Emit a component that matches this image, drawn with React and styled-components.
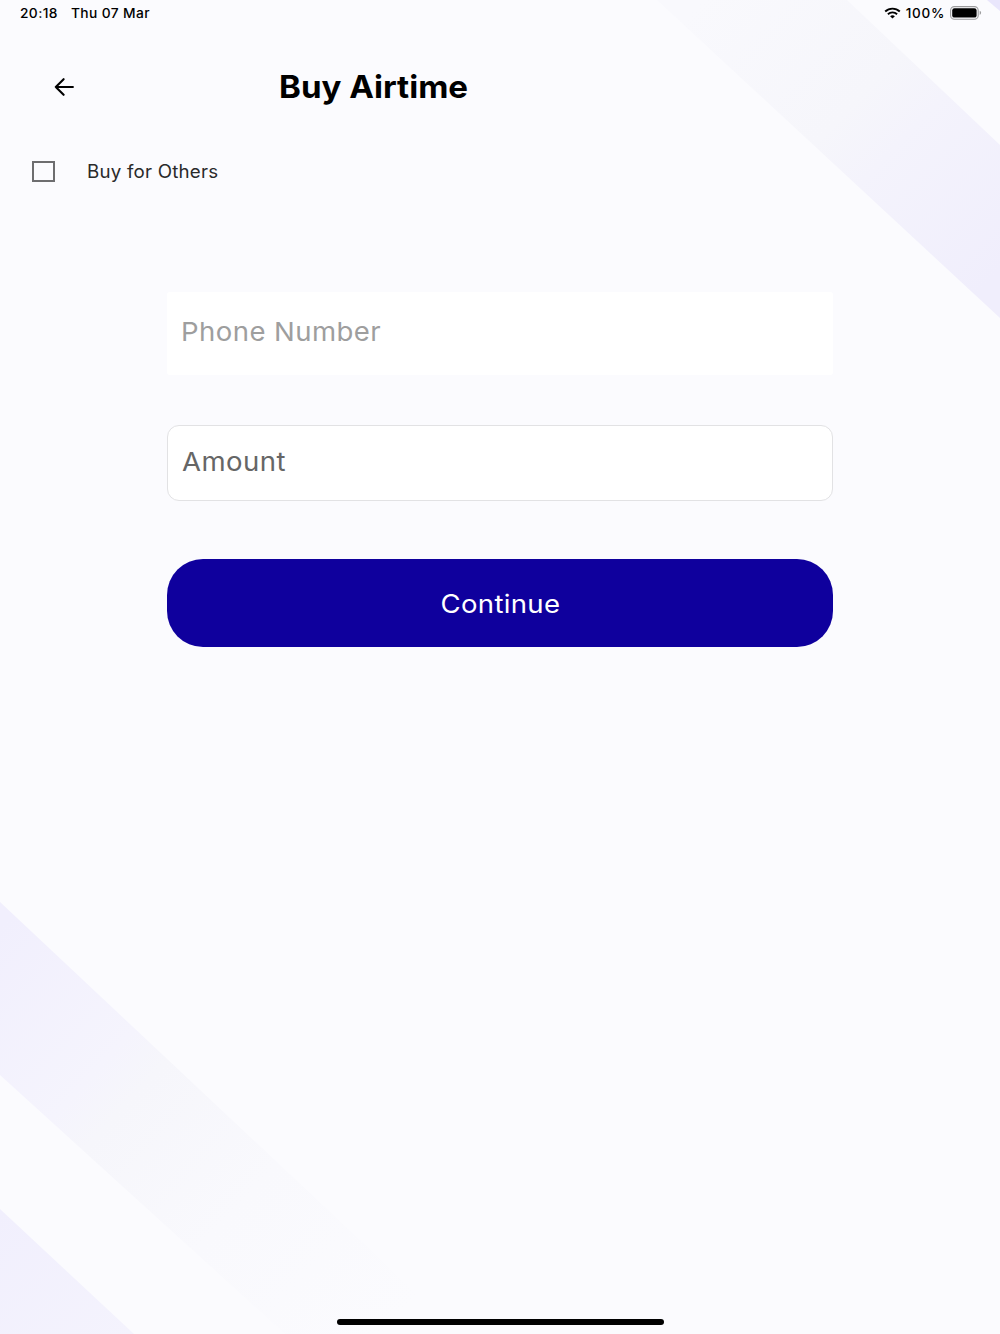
import React, { useState } from "react";
import styled, { createGlobalStyle } from "styled-components";

const BuyAirtime = () => {
  const [others, setOthers] = useState(false);

  return (
    <Screen>
      <GlobalStyle />
      <Stripes />
      <StatusBar>
        <StatusGroup $gap="15px">
          <StatusText>20:18</StatusText>
          <StatusText>Thu 07 Mar</StatusText>
        </StatusGroup>
        <StatusGroup $gap="5px">
          <WifiIcon />
          <Percent>100%</Percent>
          <BatteryIcon />
        </StatusGroup>
      </StatusBar>
      <Header>
        <BackButton aria-label="Back">
          <BackIcon />
        </BackButton>
        <Title>Buy Airtime</Title>
      </Header>
      <CheckRow onClick={() => setOthers(!others)}>
        <CheckBox $checked={others} />
        <CheckLabel>Buy for Others</CheckLabel>
      </CheckRow>
      <Form>
        <PhoneField>
          <Placeholder $color="#9e9e9e">Phone Number</Placeholder>
        </PhoneField>
        <AmountField>
          <Placeholder $color="#666666">Amount</Placeholder>
        </AmountField>
        <ContinueButton type="button">
          <ButtonText>Continue</ButtonText>
        </ContinueButton>
      </Form>
      <HomeIndicator />
    </Screen>
  );
};

export default BuyAirtime;

const Stripes = () => (
  <Backdrop viewBox="0 0 1000 1334">
    <defs>
      <linearGradient
        id="topStripe"
        gradientUnits="userSpaceOnUse"
        x1="1020"
        y1="250"
        x2="730"
        y2="-30"
      >
        <stop offset="0" stopColor="#f0eefc" />
        <stop offset="0.4" stopColor="#f4f3fc" />
        <stop offset="0.55" stopColor="#f6f6fb" />
        <stop offset="1" stopColor="#f9f9fd" />
      </linearGradient>
      <linearGradient
        id="bottomStripe"
        gradientUnits="userSpaceOnUse"
        x1="-30"
        y1="960"
        x2="380"
        y2="1340"
      >
        <stop offset="0" stopColor="#f1effd" />
        <stop offset="0.3" stopColor="#f5f4fd" />
        <stop offset="0.38" stopColor="#f6f6fb" />
        <stop offset="0.65" stopColor="#f9f9fd" />
        <stop offset="1" stopColor="#fbfbfe" />
      </linearGradient>
      <linearGradient id="cornerStripe" x1="0" y1="0" x2="1" y2="1">
        <stop offset="0" stopColor="#f1effd" />
        <stop offset="1" stopColor="#f4f3fd" />
      </linearGradient>
    </defs>
    <path d="M657 0H847L1000 145V318Z" fill="url(#topStripe)" />
    <path d="M987 0H1000V11Z" fill="#e9e6fc" />
    <path d="M0 902L460 1334H285L0 1075Z" fill="url(#bottomStripe)" />
    <path d="M0 1209L134 1334H0Z" fill="url(#cornerStripe)" />
  </Backdrop>
);

const WifiIcon = () => (
  <svg width="17" height="12" viewBox="0 0 17 12">
    <path
      d="M1.2 4.5C5.3 .6 11.7 .6 15.8 4.5M3.9 7.2C6.5 4.8 10.5 4.8 13.1 7.2"
      fill="none"
      stroke="#000"
      strokeWidth="1.9"
    />
    <path d="M8.5 11.5L6.1 9.2C7.5 8 9.5 8 10.9 9.2Z" />
  </svg>
);

const BatteryIcon = () => (
  <svg width="32" height="14" viewBox="0 0 32 14">
    <rect
      x="0.6"
      y="0.6"
      width="27.6"
      height="12.6"
      rx="3.8"
      fill="none"
      stroke="#9b9b9d"
      strokeWidth="1.1"
    />
    <rect x="2.2" y="2.2" width="24.4" height="9.4" rx="2.2" />
    <path d="M29.7 4.8C31.6 5.5 31.6 8.3 29.7 9Z" fill="#9b9b9d" />
  </svg>
);

const BackIcon = () => (
  <svg width="20" height="18" viewBox="0 0 20 18">
    <path
      d="M18.9 9H1.8M9.6 1.2L1.8 9L9.6 16.8"
      fill="none"
      stroke="#000"
      strokeWidth="2.1"
      strokeLinecap="round"
      strokeLinejoin="round"
    />
  </svg>
);

const GlobalStyle = createGlobalStyle`
  * {
    box-sizing: border-box;
  }
  body {
    margin: 0;
    background: #fbfbfe;
    font-family: Inter, "Liberation Sans", sans-serif;
  }
`;

const Screen = styled.div`
  position: relative;
  display: flex;
  flex-direction: column;
  height: 1334px;
  overflow: hidden;
  background: #fbfbfe;
  isolation: isolate;
`;

const Backdrop = styled.svg`
  position: absolute;
  inset: 0;
  width: 100%;
  height: 100%;
  z-index: -1;
`;

const StatusBar = styled.div`
  display: flex;
  justify-content: space-between;
  height: 26px;
  padding: 0 18px 0 20px;
  color: #000;
  font-size: 13px;
  font-weight: 500;
  letter-spacing: 0.35px;
`;

const StatusGroup = styled.div`
  display: flex;
  align-items: center;
  gap: ${props => props.$gap};
`;

const StatusText = styled.span`
  transform: scaleX(1.06);
  transform-origin: left;
`;

const Percent = styled.span`
  font-size: 13.5px;
  letter-spacing: 0.7px;
`;

const Header = styled.div`
  display: flex;
  align-items: center;
  height: 121px;
  padding-left: 54px;
`;

const BackButton = styled.button`
  display: flex;
  width: 225px;
  padding: 0;
  border: none;
  background: none;
`;

const Title = styled.h1`
  margin: 0;
  color: #000;
  font-size: 31.5px;
  font-weight: 700;
  line-height: 40px;
  transform: scaleX(1.05);
  transform-origin: left;
`;

const CheckRow = styled.div`
  display: flex;
  align-items: center;
  height: 49px;
  padding-left: 32px;
  gap: 32px;
`;

const CheckBox = styled.div`
  width: 23px;
  height: 21px;
  border: 2px solid #6d6d6f;
  background: ${props => (props.$checked ? "#0f009d" : "transparent")};
`;

const CheckLabel = styled.span`
  color: #2a2a2a;
  font-size: 18px;
  letter-spacing: 0.2px;
  transform: scaleX(1.04);
  transform-origin: left;
`;

const Form = styled.form`
  display: flex;
  flex-direction: column;
  padding: 96px 167px 0;
`;

const Field = styled.div`
  display: flex;
  align-items: center;
  background: #fff;
`;

const PhoneField = styled(Field)`
  height: 83px;
  padding: 0 14px 4px;
  border-radius: 3px;
`;

const AmountField = styled(Field)`
  height: 76px;
  margin-top: 50px;
  padding: 0 14px 3px;
  border: 1px solid #e2e2e4;
  border-radius: 12px;
`;

const Placeholder = styled.span`
  color: ${props => props.$color};
  font-size: 26px;
  letter-spacing: 0.4px;
  transform: scaleX(1.06);
  transform-origin: left;
`;

const ContinueButton = styled.button`
  display: flex;
  align-items: center;
  justify-content: center;
  height: 88px;
  margin-top: 58px;
  padding: 0;
  border: none;
  border-radius: 36px;
  background: #0f009d;
  color: #fff;
  font-family: inherit;
`;

const ButtonText = styled.span`
  font-size: 25.5px;
  letter-spacing: 0.3px;
  transform: scaleX(1.08);
`;

const HomeIndicator = styled.div`
  align-self: center;
  width: 327px;
  height: 6px;
  margin-top: auto;
  margin-bottom: 9px;
  border-radius: 3px;
  background: #000;
`;
